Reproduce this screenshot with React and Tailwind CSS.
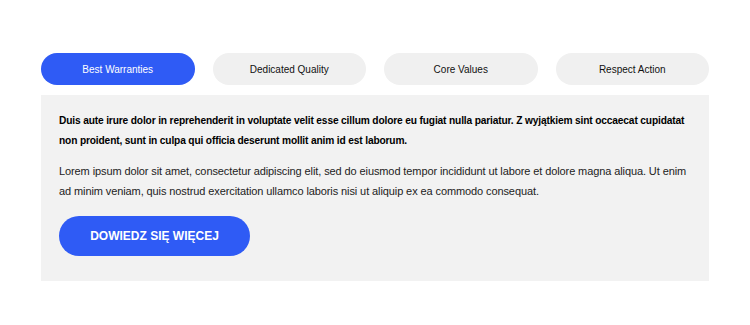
import React, { useState } from "react";

const tabs = ["Best Warranties", "Dedicated Quality", "Core Values", "Respect Action"];

const App = () => {
    const [active, setActive] = useState(0);

    return (
        <div className="w-[750px] h-[325px] bg-white font-['Liberation_Sans',Arial,sans-serif] text-black">
            <div className="px-[41px] pt-[53px]">
                {/* Tabs */}
                <div className="grid grid-cols-4 gap-[18px]">
                    {tabs.map((t, i) => (
                        <button
                            key={t}
                            onClick={() => setActive(i)}
                            className={
                                i === active
                                    ? "h-[32px] rounded-full bg-[#2f5bf5] text-white text-[10px] font-medium"
                                    : "h-[32px] rounded-full bg-[#f0f0f0] text-[#111] text-[10px] font-medium"
                            }
                        >
                            {t}
                        </button>
                    ))}
                </div>

                {/* Panel */}
                <div className="mt-[10px] h-[186px] bg-[#f2f2f2] px-[18px] pt-[16px]">
                    <p className="text-[10.2px] font-bold leading-[20px] tracking-[-0.15px]">
                        Duis aute irure dolor in reprehenderit in voluptate velit esse cillum dolore eu fugiat nulla pariatur. Z wyjątkiem sint occaecat cupidatat non proident, sunt in culpa qui officia deserunt mollit anim id est laborum.
                    </p>
                    <p className="mt-[10px] text-[11px] leading-[20px] text-[#222] tracking-[-0.1px]">
                        Lorem ipsum dolor sit amet, consectetur adipiscing elit, sed do eiusmod tempor incididunt ut labore et dolore magna aliqua. Ut enim ad minim veniam, quis nostrud exercitation ullamco laboris nisi ut aliquip ex ea commodo consequat.
                    </p>
                    <button className="mt-[15px] h-[40px] w-[191px] rounded-full bg-[#2f5bf5] text-white text-[12px] font-bold">
                        DOWIEDZ SIĘ WIĘCEJ
                    </button>
                </div>
            </div>
        </div>
    );
};

export default App;
